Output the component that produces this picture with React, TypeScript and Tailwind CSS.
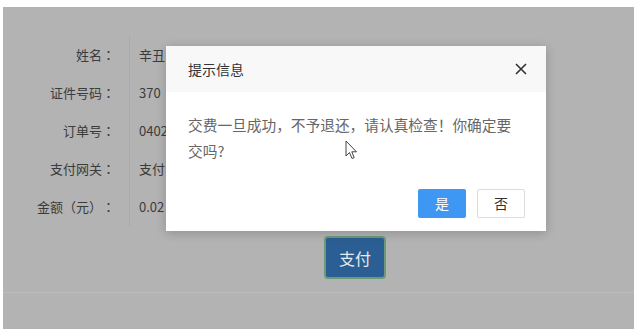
import React from "react";

const rows: [string, string][] = [
  ["姓名", "辛丑"],
  ["证件号码", "370"],
  ["订单号", "0402"],
  ["支付网关", "支付"],
  ["金额（元）", "0.02"],
];

export default function App() {
  return (
    <div
      className="w-[644px] h-[336px] bg-white overflow-hidden pt-[7px] pl-[3px] [text-spacing-trim:space-all]"
      style={{ fontFamily: '"Noto Sans CJK SC", "Noto Sans", sans-serif' }}
    >
      <div className="relative w-[631px] h-[322px] bg-[#b3b3b3]">
        <div className="pt-[29px]">
          {rows.map(([l, v]) => (
            <div key={l} className="flex h-[38px]">
              <div className="w-[127px] border-r border-[#a9a9a9] flex items-center justify-end pr-[14px] text-[13px] text-[#3b3b3b]">
                {l}
                <span className="font-['Noto_Sans_CJK_JP',sans-serif]">：</span>
              </div>
              <div className="pl-[9px] flex items-center text-[13px] text-[#3b3b3b]">{v}</div>
            </div>
          ))}
        </div>
        <div className="mt-[10px] ml-[321px] w-[62px] h-[43px] rounded-[4px] bg-[#2b5e93] border-2 border-[#6c9a78] flex items-center justify-center text-[16px] text-[#e3ecf5]">
          支付
        </div>
        <div className="mt-[13px] border-t border-[#bdbdbd]" />

        <div className="absolute left-[163px] top-[39px] w-[380px] h-[185px] bg-white shadow-[0_2px_10px_rgba(0,0,0,0.2)] flex flex-col">
          <div className="h-[46px] bg-[#f8f8f8] flex items-center justify-between pl-[22px] pr-[19px]">
            <span className="text-[14px] text-[#333]">提示信息</span>
            <svg width="12" height="12" viewBox="0 0 12 12">
              <path d="M1 1 L11 11 M11 1 L1 11" stroke="#333" strokeWidth="1.6" />
            </svg>
          </div>
          <div className="pl-[22px] pr-[24px] pt-[20px] text-[14.7px] leading-[26px] text-[#666]">
            交费一旦成功，不予退还，请认真检查！你确定要交吗?
          </div>
          <div className="flex-1" />
          <div className="flex justify-end gap-[11px] pr-[21px] pb-[13px]">
            <div className="w-[48px] h-[29px] bg-[#3d97f3] rounded-[2px] flex items-center justify-center text-[14px] text-white">
              是
            </div>
            <div className="w-[48px] h-[29px] bg-white border border-[#dcdcdc] rounded-[2px] flex items-center justify-center text-[14px] text-[#333]">
              否
            </div>
          </div>
        </div>

        <svg
          className="absolute left-[342px] top-[133px]"
          width="14"
          height="21"
          viewBox="0 0 14 21"
        >
          <path
            d="M1 1 L1 16 L4.5 12.5 L7 18.5 L9.2 17.6 L6.8 11.8 L11.5 11.8 Z"
            fill="white"
            stroke="#444"
            strokeWidth="1"
            strokeLinejoin="round"
          />
        </svg>
      </div>
    </div>
  );
}
